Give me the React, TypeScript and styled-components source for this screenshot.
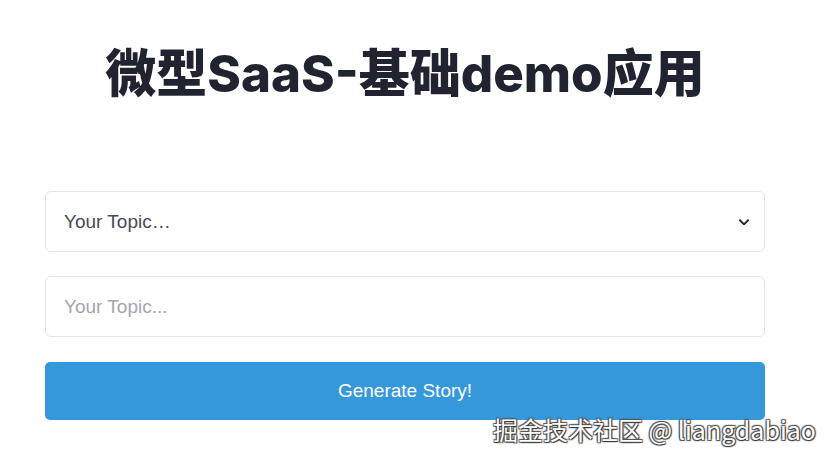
import React from "react";
import styled, { createGlobalStyle } from "styled-components";

const Global = createGlobalStyle`
  html, body { margin: 0; padding: 0; background: #ffffff; }
  body { width: 830px; height: 460px; overflow: hidden; font-family: "Liberation Sans", Arial, sans-serif; }
`;

const Page = styled.div`
  position: relative;
  width: 830px;
  height: 460px;
  display: flex;
  flex-direction: column;
  padding: 0 65px 0 45px;
  box-sizing: border-box;
`;

const Title = styled.h1`
  margin: 42px 0 0;
  text-align: center;
  font-family: Inter, "Noto Sans CJK SC", sans-serif;
  font-weight: 800;
  font-size: 51px;
  line-height: 64px;
  color: #1f2430;
`;

const Form = styled.div`
  margin-top: 85px;
  display: flex;
  flex-direction: column;
  gap: 24px;
`;

const Field = styled.div`
  height: 61px;
  box-sizing: border-box;
  border: 1px solid #e3e5e8;
  border-radius: 6px;
  background: #fff;
  display: flex;
  align-items: center;
  justify-content: space-between;
  padding: 0 13px 0 18px;
  font-size: 19px;
`;

const SelectText = styled.span`
  color: #454a54;
`;

const Placeholder = styled.span`
  color: #a2a6ad;
`;

const Button = styled.button`
  height: 58px;
  border: none;
  border-radius: 5px;
  background: #3498db;
  color: #ffffff;
  font-family: "Liberation Sans", Arial, sans-serif;
  font-size: 19px;
  margin-top: 1px;
`;

const Watermark = styled.div`
  position: absolute;
  right: 14px;
  top: 411px;
  font-family: "Noto Sans CJK SC", sans-serif;
  font-size: 25px;
  color: #ffffff;
  text-shadow: 1px 1px 1px #333, -1px -1px 1px #555, 1px -1px 1px #555, -1px 1px 1px #555;
  white-space: nowrap;
`;

export default function App() {
  return (
    <>
      <Global />
      <Page>
        <Title>微型SaaS-基础demo应用</Title>
        <Form>
          <Field>
            <SelectText>Your Topic…</SelectText>
            <svg width="14" height="14" viewBox="0 0 24 24" fill="none" stroke="#222" strokeWidth="3.2" strokeLinecap="round" strokeLinejoin="round">
              <path d="M5 9l7 7 7-7" />
            </svg>
          </Field>
          <Field>
            <Placeholder>Your Topic...</Placeholder>
          </Field>
          <Button>Generate Story!</Button>
        </Form>
        <Watermark>掘金技术社区 @ liangdabiao</Watermark>
      </Page>
    </>
  );
}
